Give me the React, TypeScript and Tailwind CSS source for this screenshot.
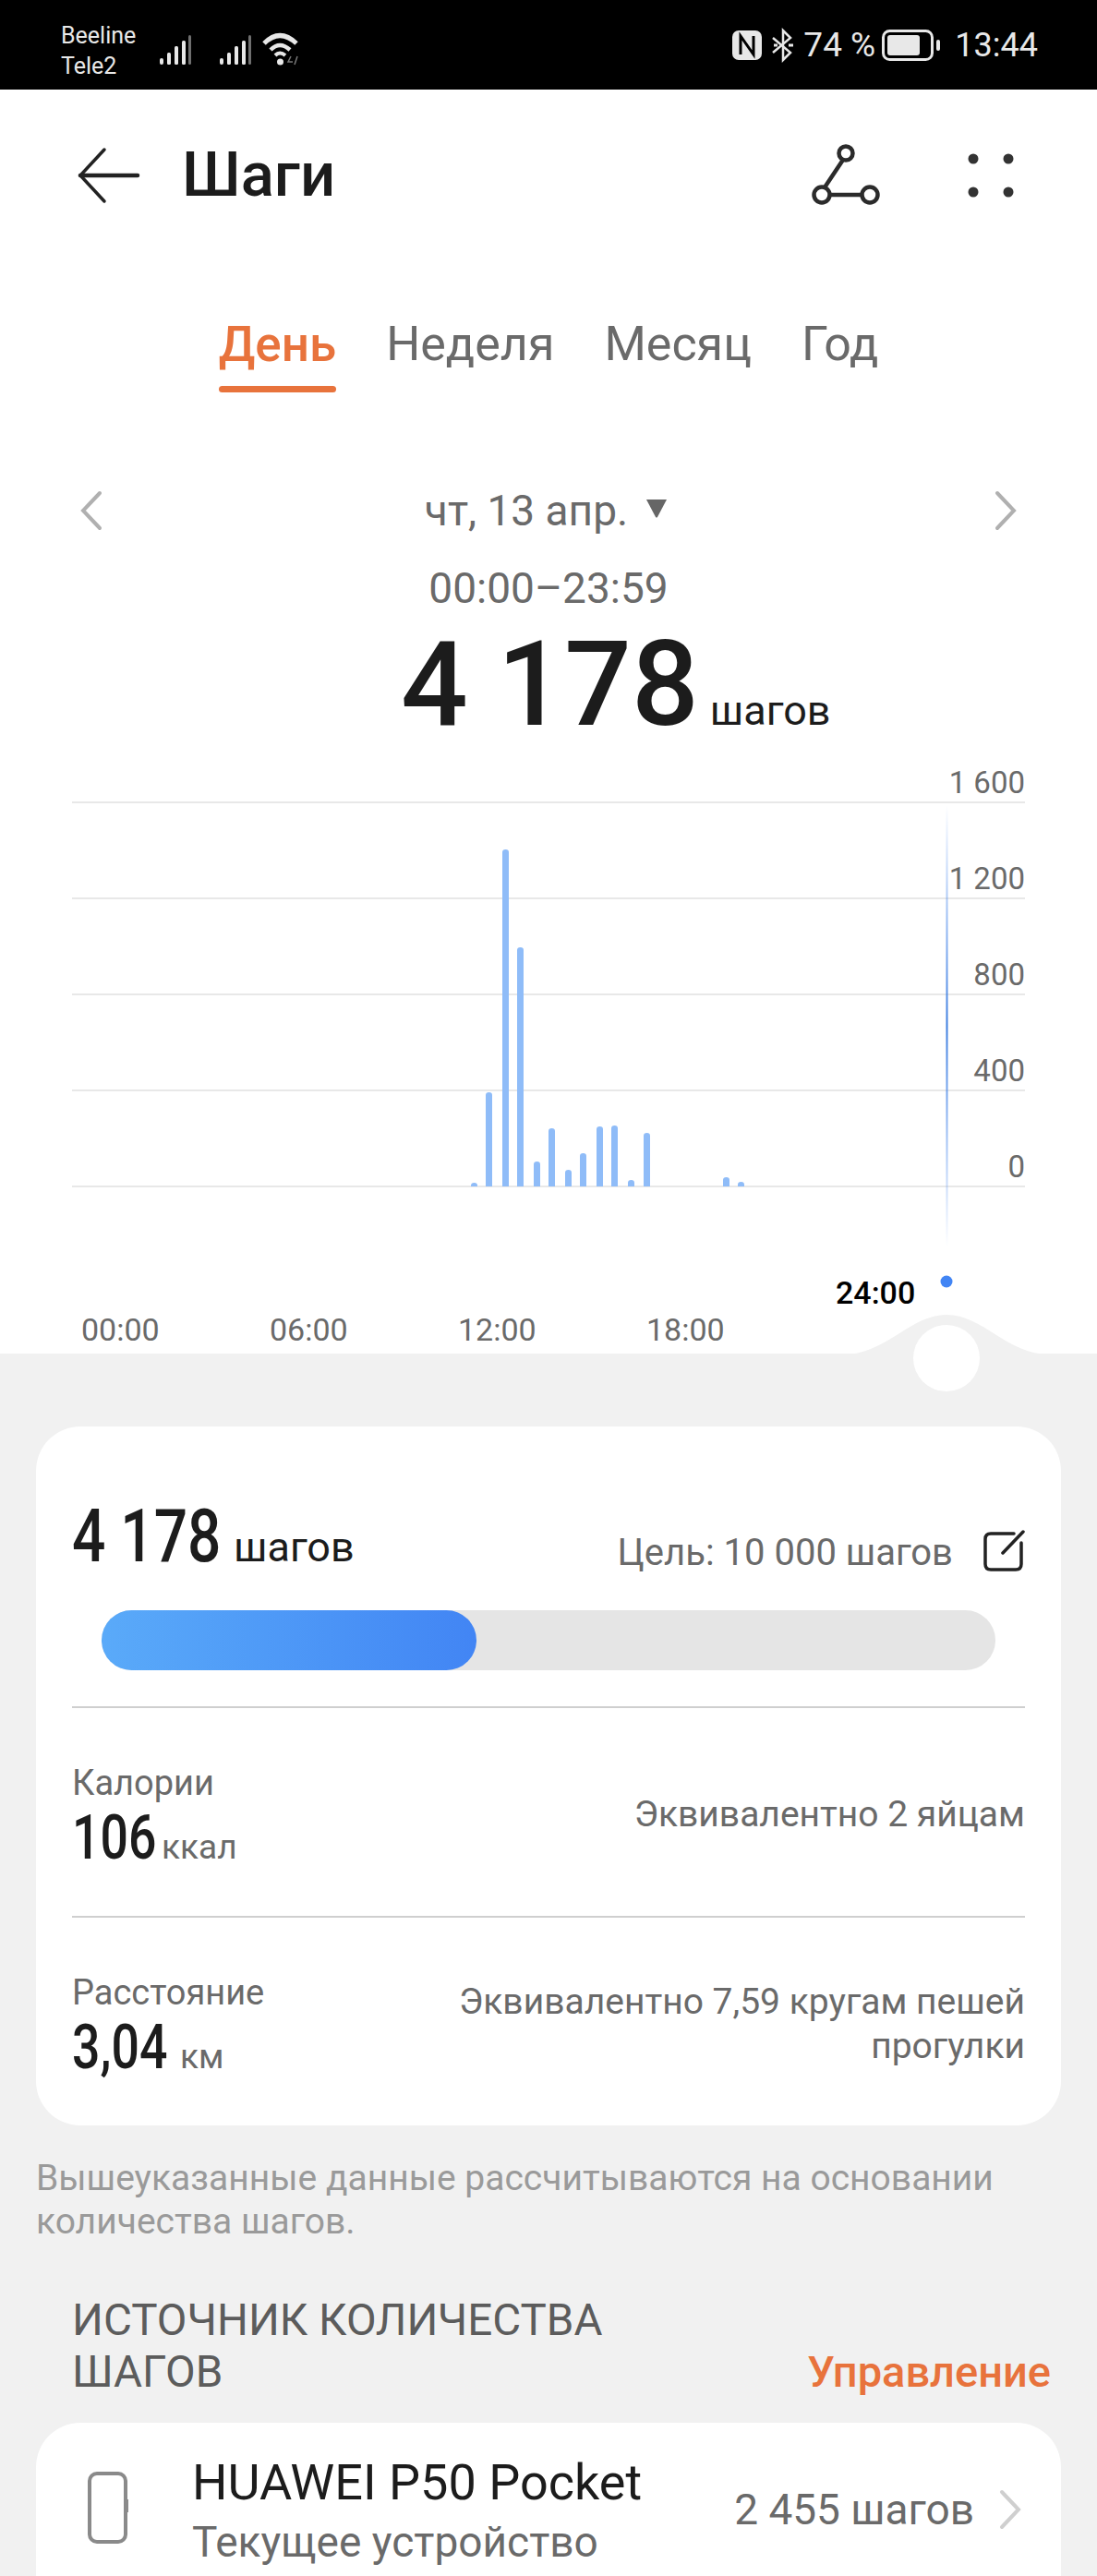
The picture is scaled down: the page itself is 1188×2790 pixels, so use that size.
const bars = [
  { x: 513.5, top: 1281 },
  { x: 529.5, top: 1183 },
  { x: 547.5, top: 920 },
  { x: 563.5, top: 1026 },
  { x: 581.5, top: 1258 },
  { x: 597.5, top: 1222 },
  { x: 615.5, top: 1267 },
  { x: 631.5, top: 1249 },
  { x: 649.5, top: 1220 },
  { x: 665.5, top: 1219 },
  { x: 683.5, top: 1278 },
  { x: 700.5, top: 1227 },
  { x: 786.5, top: 1275 },
  { x: 802.5, top: 1280 },
];

const yLabels = ['1 600', '1 200', '800', '400', '0'];
const xLabels = ['00:00', '06:00', '12:00', '18:00'];

function SignalIcon({ className }: { className?: string }) {
  return (
    <svg width="36" height="34" viewBox="0 0 36 34" className={className} fill="#e8e8e8">
      <rect x="1" y="26" width="4" height="7" rx="2" />
      <rect x="9" y="20" width="4" height="13" rx="1.5" />
      <rect x="17" y="13" width="4" height="20" rx="1.5" />
      <rect x="25" y="7" width="4" height="26" rx="1.5" />
      <rect x="32" y="1" width="3" height="32" rx="1.5" fill="#6f6f6f" />
    </svg>
  );
}

function StatusBar() {
  return (
    <div className="h-[97px] bg-black flex items-center pl-[66px] pr-[64px] text-[#e8e8e8]">
      <div className="w-[106px] text-[25px] leading-[33px] pt-[12px]">
        <div>Beeline</div>
        <div>Tele2</div>
      </div>
      <SignalIcon className="mt-[10px]" />
      <SignalIcon className="ml-[29px] mt-[10px]" />
      <svg width="44" height="36" viewBox="0 0 44 36" className="ml-[10px] mt-[9px]" fill="none" stroke="#e8e8e8">
        <path d="M3 12 Q20 -5 38 12" strokeWidth="5" />
        <path d="M10 19 Q20 9 31 19" strokeWidth="4.5" />
        <path d="M15 25 Q20 20 26 25" strokeWidth="4" />
        <circle cx="20.5" cy="32" r="3.5" fill="#e8e8e8" stroke="none" />
        <path d="M32 26 L29 32 H34 M39 26 L36 35" stroke="#777" strokeWidth="1.5" />
      </svg>
      <div className="ml-auto flex items-center">
        <svg width="32" height="32" viewBox="0 0 32 32">
          <rect width="32" height="32" rx="7" fill="#e8e8e8" />
          <path d="M9 26 V6 L23 26 V6" fill="none" stroke="#000" strokeWidth="3" />
        </svg>
        <svg width="28" height="38" viewBox="0 0 28 38" className="ml-[9px]" fill="none" stroke="#e8e8e8" strokeWidth="2.5">
          <path d="M3 11 L22 27 L14 35 V3 L22 11 L3 27" />
          <path d="M4 19 H8 M20 19 H25" strokeWidth="3" />
        </svg>
        <span className="ml-[8px] text-[37px] leading-none w-[85px]">74 %</span>
        <svg width="64" height="34" viewBox="0 0 64 34" fill="none">
          <rect x="1.5" y="1.5" width="53" height="31" rx="7" stroke="#e8e8e8" strokeWidth="3" />
          <rect x="6" y="6" width="35" height="22" rx="3" fill="#e8e8e8" />
          <rect x="59" y="11" width="4" height="12" rx="2" fill="#e8e8e8" />
        </svg>
        <span className="ml-[15px] text-[36px] leading-none">13:44</span>
      </div>
    </div>
  );
}

function Header() {
  return (
    <div className="h-[186px] flex items-center pl-[84px] pr-[90px]">
      <svg width="68" height="62" viewBox="0 0 68 62" fill="none" stroke="#222" strokeLinecap="round">
        <path d="M29 3 L3 31 L29 59" strokeWidth="3.5" />
        <path d="M3 31 H65" strokeWidth="4.5" />
      </svg>
      <h1 className="ml-[45px] text-[67px] leading-none font-medium text-[#1c1c1c]">Шаги</h1>
      <svg width="76" height="70" viewBox="0 0 76 70" className="ml-auto" fill="none" stroke="#2b2b2b" strokeWidth="4.5">
        <circle cx="37" cy="11" r="7.5" />
        <circle cx="11" cy="56" r="8.5" />
        <circle cx="63" cy="56" r="8.5" />
        <path d="M34 18 L14 48 M19.5 56 H54.5" />
      </svg>
      <svg width="50" height="50" viewBox="0 0 50 50" className="ml-[93px]" fill="#333">
        <circle cx="6" cy="7" r="5.5" />
        <circle cx="44" cy="7" r="5.5" />
        <circle cx="6" cy="43" r="5.5" />
        <circle cx="44" cy="43" r="5.5" />
      </svg>
    </div>
  );
}

function Tabs() {
  return (
    <div className="flex justify-center gap-[54px] text-[52px] leading-[62px] text-[#6a6a6a]">
      <div className="flex flex-col">
        <span className="text-[53px] text-[#e8733c] font-medium">День</span>
        <span className="mt-[14px] h-[7px] rounded-full bg-[#e8733c]" />
      </div>
      <span>Неделя</span>
      <span>Месяц</span>
      <span>Год</span>
    </div>
  );
}

function DateRow() {
  return (
    <div className="mt-[104px] flex items-center justify-between px-[86px] h-[48px]">
      <svg width="26" height="44" viewBox="0 0 26 44" fill="none" stroke="#b0b0b0" strokeWidth="4" strokeLinecap="round">
        <path d="M22 3 L4 22 L22 41" />
      </svg>
      <div className="flex items-center text-[46px] leading-none text-[#6a6a6a] mr-[4px]">
        <span>чт, 13 апр.</span>
        <svg width="26" height="22" viewBox="0 0 26 22" className="ml-[18px] mb-[6px]" fill="#666">
          <path d="M2 2 H24 L14 21 Q13 22 12 21 Z" />
        </svg>
      </div>
      <svg width="26" height="44" viewBox="0 0 26 44" fill="none" stroke="#b0b0b0" strokeWidth="4" strokeLinecap="round">
        <path d="M4 3 L22 22 L4 41" />
      </svg>
    </div>
  );
}

function Chart() {
  return (
    <div className="relative mt-[14px]">
      <div className="px-[78px]">
        {yLabels.map((label, i) => (
          <div
            key={label}
            className={`flex items-end justify-end border-b-2 border-[#e8e8e8] ${i === 0 ? 'h-[50px]' : 'h-[104px]'}`}
          >
            <span className="text-[33px] leading-[44px] mb-[-2px] text-[#6a6a6a]">{label}</span>
          </div>
        ))}
      </div>
      {/* bars sit on top of the grid */}
      <svg width="1188" height="590" viewBox="0 820 1188 590" className="absolute left-0 top-0" fill="none">
        <defs>
          <linearGradient id="cursor" x1="0" y1="0" x2="0" y2="1">
            <stop offset="0" stopColor="#4285f4" stopOpacity="0" />
            <stop offset="0.5" stopColor="#3f7fe0" />
            <stop offset="1" stopColor="#4285f4" stopOpacity="0" />
          </linearGradient>
        </defs>
        {bars.map(b => (
          <path
            key={b.x}
            d={`M${b.x - 3.5} 1285 V${b.top + 3} Q${b.x - 3.5} ${b.top} ${b.x} ${b.top} Q${b.x + 3.5} ${b.top} ${b.x + 3.5} ${b.top + 3} V1285 Z`}
            fill="#8fbcf8"
          />
        ))}
        <rect x="1024.5" y="872" width="2" height="478" fill="url(#cursor)" />
        <circle cx="1025" cy="1388" r="6.5" fill="#4285f4" />
      </svg>
    </div>
  );
}

function ChartAxis() {
  return (
    <div className="relative h-[181px]">
      <div className="flex pl-[88px] pt-[132px]">
        {xLabels.map(label => (
          <span key={label} className="w-[204px] text-[34px] leading-[44px] text-[#6a6a6a]">
            {label}
          </span>
        ))}
      </div>
      <span className="absolute left-[905px] top-[92px] text-[34px] leading-[44px] font-medium text-black">24:00</span>
      {/* slider handle rising out of the grey page */}
      <svg width="280" height="90" viewBox="0 0 280 90" className="absolute left-[885px] top-[138px]">
        <path d="M0 43 H28 C75 43 100 0 140 0 C180 0 205 43 252 43 H280 V90 H0 Z" fill="#f1f1f1" />
        <circle cx="140" cy="47" r="36" fill="#fff" />
      </svg>
    </div>
  );
}

function EditIcon() {
  return (
    <svg width="46" height="46" viewBox="0 0 46 46" fill="none" stroke="#222" strokeWidth="3.5" strokeLinecap="round" className="ml-[32px] mb-[2px]">
      <path d="M34 4 H9 Q3 4 3 10 V37 Q3 43 9 43 H36 Q42 43 42 37 V14" />
      <path d="M44 2 L22 25" />
    </svg>
  );
}

// Roboto squeezed sideways: the numerals in the cards are a condensed face
function Narrow({ text, className }: { text: string; className: string }) {
  return (
    <span className={`whitespace-nowrap font-medium text-[#1c1c1c] ${className}`}>
      <span className="inline-block origin-left scale-x-[0.8]">{text}</span>
    </span>
  );
}

function StatRow({ label, value, valueWidth, unit, note }: { label: string; value: string; valueWidth: string; unit: string; note: string }) {
  return (
    <div className="flex items-center justify-between h-[227px] pt-[4px] border-t-2 border-[#cfcfcf]">
      <div className="mt-[8px]">
        <div className="text-[38px] leading-[46px] text-[#6a6a6a]">{label}</div>
        <div className="flex items-baseline">
          <Narrow text={value} className={`text-[67px] leading-[72px] ${valueWidth}`} />
          <span className="ml-[9px] text-[37px] text-[#6a6a6a]">{unit}</span>
        </div>
      </div>
      <div className="w-[640px] text-right text-[39px] leading-[48px] text-[#6a6a6a]">{note}</div>
    </div>
  );
}

export default function App() {
  return (
    <div className="w-[1188px] h-[2790px] overflow-hidden bg-[#f1f1f1] font-['Roboto',sans-serif]">
      <StatusBar />
      <div className="bg-white h-[1369px] flex flex-col">
        <Header />
        <div className="mt-[60px]">
          <Tabs />
        </div>
        <DateRow />
        <div className="mt-[32px] text-center text-[46px] leading-[56px] text-[#6a6a6a]">00:00–23:59</div>
        <div className="mt-[11px] flex items-baseline pl-[434px]">
          <span className="text-[128px] leading-[130px] font-medium text-[#1c1c1c]">4 178</span>
          <span className="ml-[12px] text-[45px] text-[#1c1c1c]">шагов</span>
        </div>
        <Chart />
        <ChartAxis />
      </div>

      <div className="mt-[79px] mx-[39px] w-[1110px] rounded-[48px] bg-white px-[39px] h-[757px]">
        <div className="flex items-end justify-between pt-[86px]">
          <div className="flex items-baseline">
            <Narrow text="4 178" className="text-[80px] leading-[66px] w-[156px]" />
            <span className="ml-[19px] text-[45px] leading-none text-[#1c1c1c]">шагов</span>
          </div>
          <div className="flex items-end mb-[-7px]">
            <span className="text-[40px] leading-[46px] text-[#6a6a6a]">Цель: 10 000 шагов</span>
            <EditIcon />
          </div>
        </div>
        <div className="mt-[46px] mx-[32px] h-[65px] rounded-full bg-[#e5e5e5]">
          <div className="h-full w-[406px] rounded-full bg-gradient-to-r from-[#5aaaf9] to-[#4285f4]" />
        </div>
        <div className="mt-[39px]">
          <StatRow label="Калории" value="106" valueWidth="w-[88px]" unit="ккал" note="Эквивалентно 2 яйцам" />
          <StatRow label="Расстояние" value="3,04" valueWidth="w-[108px]" unit="км" note="Эквивалентно 7,59 кругам пешей прогулки" />
        </div>
      </div>

      <p className="mt-[34px] mx-[39px] w-[1100px] text-[39px] leading-[47px] text-[#9a9a9a]">
        Вышеуказанные данные рассчитываются на основании количества шагов.
      </p>

      <div className="mt-[55px] pl-[78px] pr-[50px] flex items-end justify-between">
        <h2 className="w-[640px] text-[47.5px] leading-[56px] text-[#5c5c5c]">ИСТОЧНИК КОЛИЧЕСТВА ШАГОВ</h2>
        <span className="text-[47px] leading-[56px] font-medium text-[#e8733c]">Управление</span>
      </div>

      <div className="mt-[27px] mx-[39px] w-[1110px] h-[300px] rounded-t-[48px] bg-white pl-[56px] pr-[46px] pt-[35px] flex items-start">
        <svg width="44" height="78" viewBox="0 0 44 78" className="mt-[18px]" fill="none" stroke="#8a8a8a" strokeWidth="4">
          <rect x="2" y="2" width="39" height="74" rx="8" />
          <path d="M43 30 V44" strokeWidth="2" />
        </svg>
        <div className="ml-[69px]">
          <div className="text-[54px] leading-[60px] text-[#1c1c1c]">HUAWEI P50 Pocket</div>
          <div className="mt-[7px] text-[46px] leading-[54px] text-[#6a6a6a]">Текущее устройство</div>
        </div>
        <div className="ml-auto mt-[32px] flex items-center">
          <span className="text-[46px] leading-[54px] text-[#6a6a6a]">2 455 шагов</span>
          <svg width="26" height="44" viewBox="0 0 26 44" className="ml-[26px] mr-[-4px]" fill="none" stroke="#cfcfcf" strokeWidth="4" strokeLinecap="round">
            <path d="M4 3 L22 22 L4 41" />
          </svg>
        </div>
      </div>
    </div>
  );
}
